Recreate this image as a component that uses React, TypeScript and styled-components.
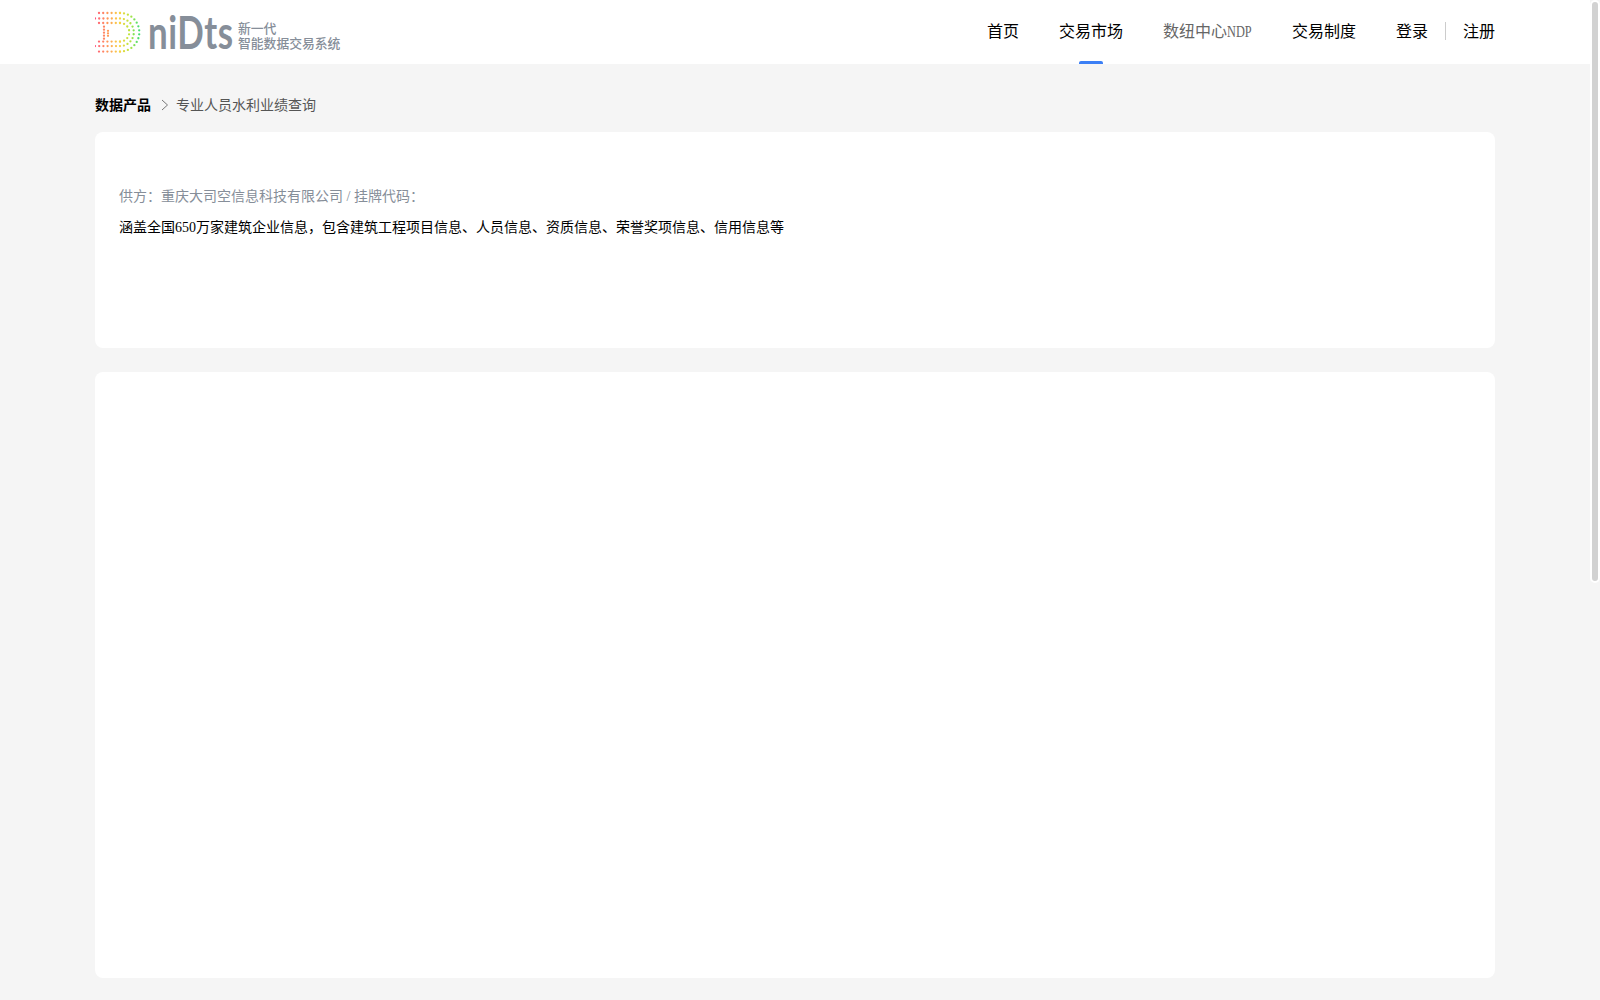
import styled, { createGlobalStyle } from "styled-components";

const GlobalStyle = createGlobalStyle`
  html, body {
    margin: 0;
    padding: 0;
    height: 100%;
    overflow: hidden;
    background: #f5f5f5;
    font-family: "Liberation Serif", "Noto Sans CJK SC", serif;
  }
`;

const navItems = [
  { label: "首页" },
  { label: "交易市场", active: true },
  { label: "数纽中心", suffix: "NDP", muted: true },
  { label: "交易制度" },
];

// 点阵 D 的颜色：左边红橙，右边转绿
const dotColor = (x: number) => {
  const stops = [
    [0, 255, 85, 125],
    [12, 255, 150, 90],
    [24, 250, 210, 70],
    [34, 190, 228, 60],
    [46, 45, 222, 125],
  ];
  for (let i = 1; i < stops.length; i++) {
    if (x <= stops[i][0]) {
      const a = stops[i - 1];
      const b = stops[i];
      const t = (x - a[0]) / (b[0] - a[0]);
      const c = [1, 2, 3].map((k) => Math.round(a[k] + (b[k] - a[k]) * t));
      return `rgb(${c[0]},${c[1]},${c[2]})`;
    }
  }
  return "rgb(45,222,125)";
};

const dDots = () => {
  const dots: { x: number; y: number }[] = [];
  const cx = 25;
  const cy = 21.3;
  [
    { x0: 4, r: 19.3 },
    { x0: 0, r: 13.8 },
    { x0: 4, r: 9.3 },
  ].forEach(({ x0, r }) => {
    for (let x = x0; x < cx; x += 4.2) {
      dots.push({ x, y: cy - r });
      dots.push({ x, y: cy + r });
    }
    const n = Math.round((Math.PI * r) / 4);
    for (let i = 0; i <= n; i++) {
      const a = -Math.PI / 2 + (Math.PI * i) / n;
      dots.push({ x: cx + r * Math.cos(a), y: cy + r * Math.sin(a) });
    }
  });
  for (let y = 15.7; y <= 28; y += 3) {
    dots.push({ x: 9, y });
  }
  for (let y = 19.8; y <= 25; y += 2.5) {
    dots.push({ x: 13, y });
  }
  return dots;
};

const LogoMark = () => (
  <svg width="48" height="42" viewBox="0 0 48 42">
    {dDots().map((d, i) => (
      <circle key={i} cx={d.x} cy={d.y} r="1.15" fill={dotColor(d.x)} />
    ))}
  </svg>
);

// 字是窄长的，用 viewBox 横向压缩
const LogoWord = () => (
  <svg width="85" height="42" viewBox="0 0 112 42" preserveAspectRatio="none">
    <text
      x="0"
      y="38"
      fontFamily="Lato, sans-serif"
      fontSize="46"
      fontWeight="700"
      fill="#868e99"
      textLength="112"
      lengthAdjust="spacing"
    >
      niDts
    </text>
  </svg>
);

export default function App() {
  return (
    <Shell>
      <GlobalStyle />
      <Page>
        <Header>
          <HeaderInner>
            <Logo>
              <LogoMark />
              <LogoWord />
              <LogoSlogan>
                <span>新一代</span>
                <span>智能数据交易系统</span>
              </LogoSlogan>
            </Logo>
            <Nav>
              {navItems.map((item) => (
                <NavItem key={item.label} $active={item.active} $muted={item.muted}>
                  {item.label}
                  {item.suffix && <NarrowLatin>{item.suffix}</NarrowLatin>}
                </NavItem>
              ))}
              <Auth>
                <AuthLink>登录</AuthLink>
                <AuthDivider />
                <AuthLink>注册</AuthLink>
              </Auth>
            </Nav>
          </HeaderInner>
        </Header>
        <Main>
          <Breadcrumb>
            <Crumb>数据产品</Crumb>
            <CrumbArrow viewBox="0 0 8 12">
              <path d="M1 1 L6.5 6 L1 11" fill="none" stroke="#777" strokeWidth="1" />
            </CrumbArrow>
            <CrumbCurrent>专业人员水利业绩查询</CrumbCurrent>
          </Breadcrumb>
          <InfoCard>
            <Supplier>供方：重庆大司空信息科技有限公司 / 挂牌代码：</Supplier>
            <Desc>涵盖全国650万家建筑企业信息，包含建筑工程项目信息、人员信息、资质信息、荣誉奖项信息、信用信息等</Desc>
          </InfoCard>
          <ContentCard />
        </Main>
      </Page>
      <ScrollTrack>
        <ScrollThumb />
      </ScrollTrack>
    </Shell>
  );
}

const Shell = styled.div`
  display: flex;
  height: 100vh;
  overflow: hidden;
`;

const Page = styled.div`
  flex: 1;
  min-width: 0;
`;

const ScrollTrack = styled.div`
  flex: none;
  width: 10px;
  background: #f5f5f5;
`;

const ScrollThumb = styled.div`
  height: 583px;
  box-sizing: border-box;
  background: #d2d2d2;
  border: 2px solid #fff;
  border-radius: 5px;
`;

const Header = styled.header`
  height: 64px;
  background: #fff;
`;

const HeaderInner = styled.div`
  width: 1400px;
  height: 100%;
  margin: 0 auto;
  display: flex;
  justify-content: space-between;
`;

const Logo = styled.div`
  display: flex;
  align-items: center;
  svg {
    flex: none;
    margin-right: 5px;
  }
`;

const LogoSlogan = styled.div`
  display: flex;
  flex-direction: column;
  font-family: "Noto Sans CJK SC", sans-serif;
  font-size: 12.8px;
  line-height: 15px;
  font-weight: 500;
  color: #868e99;
  margin-top: 6px;
`;

const Nav = styled.nav`
  display: flex;
  gap: 40px;
`;

const NavItem = styled.a<{ $active?: boolean; $muted?: boolean }>`
  position: relative;
  font-size: 16px;
  line-height: 64px;
  color: ${(p) => (p.$muted ? "#666" : "#000")};
  &::after {
    content: "";
    display: ${(p) => (p.$active ? "block" : "none")};
    position: absolute;
    left: 50%;
    bottom: 0;
    width: 24px;
    height: 3px;
    margin-left: -12px;
    border-radius: 2px 2px 0 0;
    background: #3b7ff5;
  }
`;

const NarrowLatin = styled.span`
  display: inline-block;
  margin-right: -7px;
  transform: scaleX(0.77);
  transform-origin: left center;
`;

const Auth = styled.div`
  display: flex;
  align-items: flex-start;
  gap: 17px;
  padding-top: 21px;
`;

const AuthLink = styled.a`
  font-size: 16px;
  line-height: 22px;
  color: #000;
`;

const AuthDivider = styled.i`
  width: 1px;
  height: 18px;
  margin-top: 1px;
  background: #ccc;
`;

const Main = styled.main`
  width: 1400px;
  margin: 0 auto;
`;

const Breadcrumb = styled.div`
  display: flex;
  align-items: center;
  height: 68px;
  padding-top: 12px;
  box-sizing: border-box;
  font-size: 14px;
`;

const Crumb = styled.span`
  font-weight: 700;
  color: #000;
`;

const CrumbArrow = styled.svg`
  width: 8px;
  height: 12px;
  margin: 1px 7px 0 10px;
`;

const CrumbCurrent = styled.span`
  color: #555;
`;

const Card = styled.section`
  background: #fff;
  border-radius: 8px;
`;

const InfoCard = styled(Card)`
  height: 216px;
  padding: 57px 24px 0;
  box-sizing: border-box;
  margin-bottom: 24px;
`;

const Supplier = styled.div`
  font-size: 14px;
  line-height: 16px;
  color: #868e99;
`;

const Desc = styled.div`
  margin-top: 15px;
  font-size: 14px;
  line-height: 16px;
  color: #000;
`;

const ContentCard = styled(Card)`
  height: 606px;
`;
